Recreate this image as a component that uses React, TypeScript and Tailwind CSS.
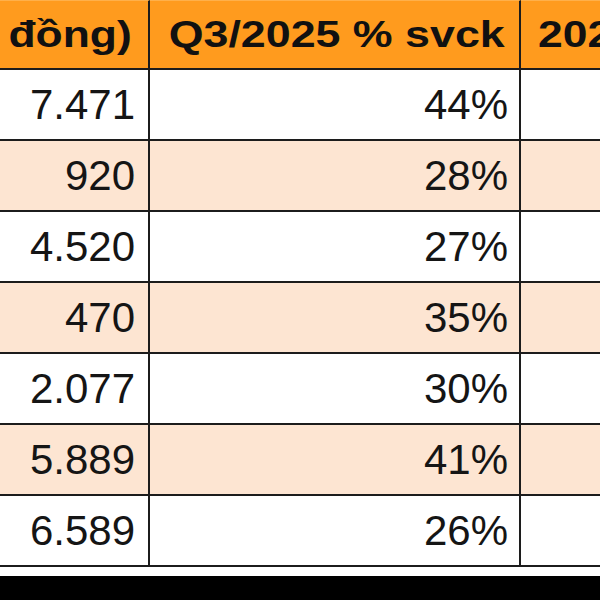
import React from "react";

type row = {
  value: string;
  change: string;
};

const rows: row[] = [
  { value: "7.471", change: "44%" },
  { value: "920", change: "28%" },
  { value: "4.520", change: "27%" },
  { value: "470", change: "35%" },
  { value: "2.077", change: "30%" },
  { value: "5.889", change: "41%" },
  { value: "6.589", change: "26%" },
];

const App = () => {
  return (
    <div
      className="w-[600px] h-[600px] overflow-hidden bg-white flex flex-col"
      style={{ fontFamily: '"Liberation Sans", Arial, sans-serif' }}
    >
      <div className="grid grid-cols-[150px_371px_1fr] w-[600px]">
        {/* header – the screenshot's header text is stretched wide */}
        <div className="h-[70px] bg-[#ff9b1e] border-t border-t-[#ffb04a] border-r-2 border-b-2 border-[#1c1c1c] flex items-center justify-end pr-[16px] text-[37px] font-bold text-[#111] whitespace-nowrap">
          <span className="inline-block scale-x-[1.2] origin-right">đồng)</span>
        </div>
        <div className="h-[70px] bg-[#ff9b1e] border-t border-t-[#ffb04a] border-r-2 border-b-2 border-[#1c1c1c] flex items-center justify-end pr-[14px] text-[37px] font-bold text-[#111] whitespace-nowrap">
          <span className="inline-block scale-x-[1.21] origin-right">Q3/2025 % svck</span>
        </div>
        <div className="h-[70px] bg-[#ff9b1e] border-t border-t-[#ffb04a] border-b-2 border-[#1c1c1c] flex items-center pl-[17px] text-[37px] font-bold text-[#111] whitespace-nowrap overflow-hidden">
          <span className="inline-block scale-x-[1.2] origin-left">2025</span>
        </div>

        {rows.map((r, i) => {
          const bg = i % 2 === 1 ? "bg-[#fde5d2]" : "bg-white";
          return (
            <React.Fragment key={i}>
              <div
                className={`h-[71px] ${bg} border-r-2 border-b-2 border-[#1c1c1c] flex items-center justify-end pr-[13px] text-[42px] text-[#151515]`}
              >
                {r.value}
              </div>
              <div
                className={`h-[71px] ${bg} border-r-2 border-b-2 border-[#1c1c1c] flex items-center justify-end pr-[11px] text-[42px] text-[#151515]`}
              >
                {r.change}
              </div>
              <div className={`h-[71px] ${bg} border-b-2 border-[#1c1c1c]`} />
            </React.Fragment>
          );
        })}
      </div>
      <div className="h-[9px] bg-white" />
      <div className="flex-1 bg-black" />
    </div>
  );
};

export default App;
